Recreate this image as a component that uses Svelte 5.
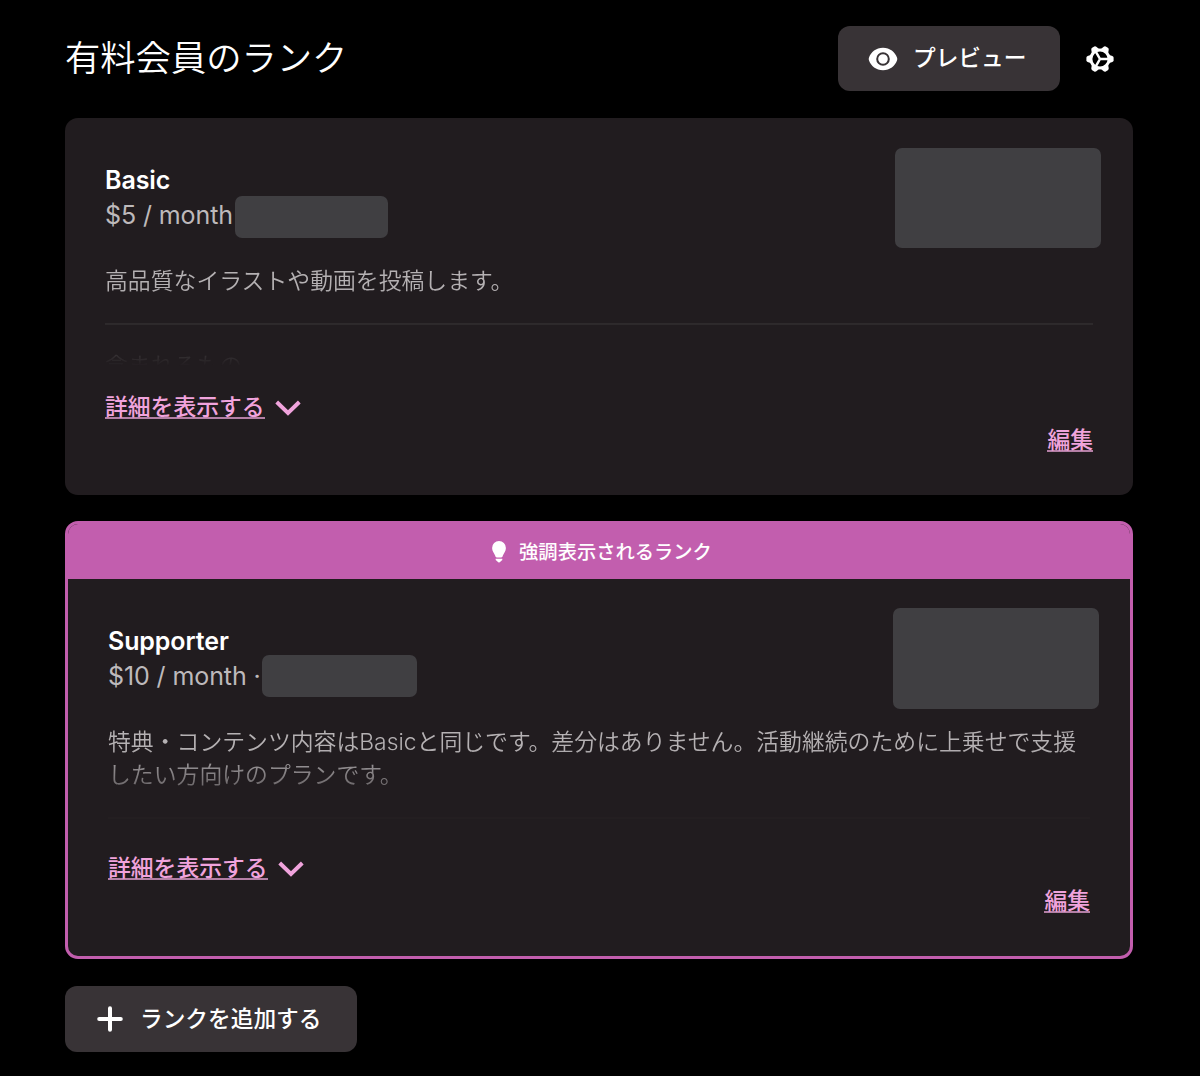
<script lang="ts">
  type Tier = {
    name: string;
    price: string;
    description: string;
    included?: string;
    featured: boolean;
  };

  const tiers: Tier[] = [
    {
      name: 'Basic',
      price: '$5 / month',
      description: '高品質なイラストや動画を投稿します。',
      included: '含まれるもの',
      featured: false
    },
    {
      name: 'Supporter',
      price: '$10 / month ·',
      description:
        '特典・コンテンツ内容はBasicと同じです。差分はありません。活動継続のために上乗せで支援したい方向けのプランです。',
      featured: true
    }
  ];
</script>

<main class="page">
  <header class="page-header">
    <h1>有料会員のランク</h1>
    <div class="header-actions">
      <button class="button preview">
        <svg width="30" height="24" viewBox="0 0 30 24">
          <path d="M15 .7C8 .7 3 5.100 1 10.500q-.6 1.500 0 3C3 18.900 8 23.300 15 23.300S27 18.900 29 13.500q.6-1.500 0-3C27 5.100 22 .7 15 .7z" fill="#fff" />
          <circle cx="15" cy="12" r="5.800" fill="#fff" stroke="#383336" stroke-width="2" />
        </svg>
        <span>プレビュー</span>
      </button>
      <button class="icon-button" aria-label="設定">
        <svg width="28" height="28" viewBox="-14 -14 28 28" fill="none" stroke="#fff">
          <circle r="9.100" stroke-width="3" />
          <path d="M0 0H9M0 0L-4.500 7.800M0 0L-4.500-7.800" stroke-width="2.500" />
          <g fill="#fff" stroke="none">
            {#each [0, 60, 120, 180, 240, 300] as angle}
              <path d="M8-4.600L12.400-2.900Q13.600-2.400 13.600-1.200V1.200Q13.600 2.400 12.400 2.900L8 4.600z" transform="rotate({angle})" />
            {/each}
          </g>
        </svg>
      </button>
    </div>
  </header>

  <section class="tiers">
    {#each tiers as tier}
      <article class="tier" class:featured={tier.featured}>
        {#if tier.featured}
          <div class="banner">
            <svg width="14" height="22" viewBox="0 0 14 22" fill="#fff">
              <path d="M7 0a6.900 6.900 0 0 0-6.900 6.900c0 3.300 2 4.800 3 7.500.4 1.200.6 2 1.800 2h4.200c1.200 0 1.400-.8 1.800-2 1-2.700 3-4.200 3-7.500A6.900 6.900 0 0 0 7 0z" />
              <path d="M3.700 17.700h6.600v1.300L7.700 21.300q-.7.500-1.400 0L3.700 19z" />
            </svg>
            <span>強調表示されるランク</span>
          </div>
        {/if}

        <div class="tier-body">
          <div class="tier-head">
            <div class="tier-title">
              <h2>{tier.name}</h2>
              <div class="price">
                <span>{tier.price}</span>
                <span class="block members"></span>
              </div>
            </div>
            <div class="block cover"></div>
          </div>

          <div class="details">
            <p>{tier.description}</p>
            <hr />
            {#if tier.included}
              <p>{tier.included}</p>
            {/if}
          </div>

          <button class="link expand">
            <span class="underlined">詳細を表示する</span>
            <svg width="26" height="16" viewBox="0 0 26 16" fill="none" stroke="#f0a3dc" stroke-width="3.900">
              <path d="M1.700 2L13 13 24.300 2" />
            </svg>
          </button>
          <div class="tier-footer">
            <button class="link"><span class="underlined">編集</span></button>
          </div>
        </div>
      </article>
    {/each}
  </section>

  <button class="button add">
    <svg width="26" height="26" viewBox="0 0 26 26" fill="none" stroke="#fff" stroke-width="4" stroke-linecap="round">
      <path d="M13 2.200v21.600M2.200 13h21.600" />
    </svg>
    <span>ランクを追加する</span>
  </button>
</main>

<style>
  :global(body) {
    background: #000;
  }
  .page {
    box-sizing: border-box;
    width: 1200px;
    height: 1076px;
    padding: 26px 67px 24px 65px;
    background: #000;
    color: #fff;
    font-family: Inter, 'Noto Sans CJK JP', sans-serif;
    overflow: hidden;
  }
  h1,
  h2,
  p {
    margin: 0;
  }
  button {
    border: 0;
    padding: 0;
    background: none;
    color: inherit;
    font: inherit;
    cursor: pointer;
  }
  svg {
    display: block;
    flex-shrink: 0;
  }

  /* Header */
  .page-header {
    display: flex;
    justify-content: space-between;
    height: 65px;
    margin-bottom: 27px;
  }
  h1 {
    font-size: 35.300px;
    font-weight: 350;
    line-height: 65px;
  }
  .header-actions {
    display: flex;
    align-items: center;
    gap: 26px;
    padding-right: 19px;
  }
  .button {
    box-sizing: border-box;
    display: flex;
    align-items: center;
    height: 65px;
    border-radius: 12px;
    background: #383336;
    font-size: 22.700px;
    font-weight: 500;
    line-height: 33px;
  }
  .button span {
    margin-top: -3px;
  }
  .preview {
    width: 222px;
    padding-left: 30px;
    gap: 15px;
  }

  /* Tier cards */
  .tiers {
    display: flex;
    flex-direction: column;
    gap: 26px;
  }
  .tier {
    box-sizing: border-box;
    height: 377px;
    border-radius: 13px;
    background: #211c1f;
    overflow: hidden;
  }
  .tier.featured {
    height: 438px;
    border: 3px solid #c25eae;
  }
  .banner {
    display: flex;
    align-items: center;
    justify-content: center;
    gap: 13px;
    height: 55px;
    padding: 1px 0 0 6px;
    box-sizing: border-box;
    background: #c25eae;
    font-size: 19.300px;
    font-weight: 500;
    line-height: 28px;
  }
  .tier-body {
    padding: 30px 40px 0;
  }
  .featured .tier-body {
    padding-top: 29px;
  }
  .tier-head {
    display: flex;
    justify-content: space-between;
    height: 116px;
    margin-right: -8px;
  }
  .featured .tier-head {
    height: 117px;
    margin-right: -9px;
  }
  .tier-title {
    padding-top: 14px;
  }
  .featured .tier-title {
    padding-top: 15px;
  }
  h2 {
    font-size: 25px;
    font-weight: 600;
    line-height: 36px;
    letter-spacing: -0.1px;
  }
  .price {
    display: flex;
    align-items: center;
    gap: 2px;
    height: 34px;
    color: #bdb9bb;
    font-size: 25px;
    letter-spacing: -0.1px;
  }
  .block {
    border-radius: 7px;
    background: #403f42;
  }
  .members {
    width: 153px;
    height: 42px;
    margin-top: 4px;
  }
  .featured .price {
    gap: 1px;
  }
  .featured .members {
    width: 155px;
    margin-top: 0;
  }
  .cover {
    width: 206px;
    height: 100px;
  }
  .featured .cover {
    height: 101px;
  }

  /* Collapsed details fade out towards the bottom */
  .details {
    box-sizing: border-box;
    height: 104px;
    padding-top: 1px;
    overflow: hidden;
    color: #b5b1b3;
    font-size: 22.850px;
    font-weight: 350;
    line-height: 33px;
    mask-image: linear-gradient(#000 22%, transparent 98%);
  }
  hr {
    height: 2px;
    margin: 25px 0;
    border: 0;
    background: #3a3637;
  }

  .link {
    color: #f0a3dc;
    font-size: 22.800px;
    font-weight: 500;
    line-height: 30px;
  }
  .underlined {
    display: block;
    height: 25px;
    border-bottom: 2px solid #b37fa5;
    line-height: 29px;
  }
  .expand {
    display: flex;
    align-items: center;
    gap: 10px;
    margin-top: 24px;
  }
  .expand svg {
    margin-top: 4px;
  }
  .tier-footer {
    display: flex;
    justify-content: flex-end;
    margin-top: 6px;
  }

  .add {
    width: 292px;
    height: 66px;
    margin-top: 27px;
    padding-left: 32px;
    gap: 17px;
  }
  .add span {
    margin-top: -2px;
  }
</style>
